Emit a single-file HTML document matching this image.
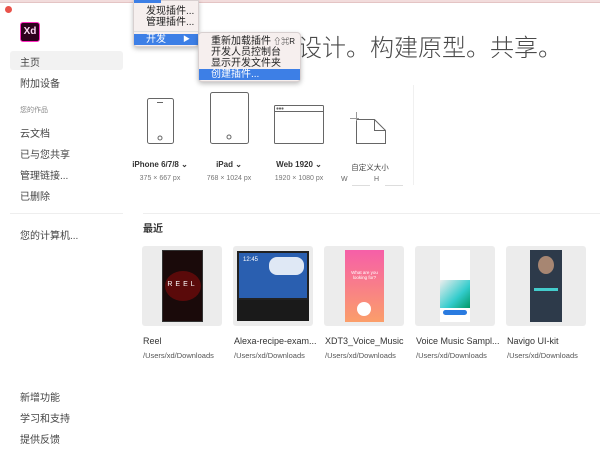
<!DOCTYPE html>
<html><head><meta charset="utf-8"><style>
*{margin:0;padding:0;box-sizing:border-box}
body{width:600px;height:453px;overflow:hidden;background:#fff;position:relative;font-family:"Liberation Sans","Noto Sans CJK SC",sans-serif;color:#333}
.a{position:absolute}
.side{font-size:10px;color:#444;left:20px}
.menu{background:#f6efee;border:1px solid #d8d0d0;box-shadow:0 2px 5px rgba(0,0,0,.25);border-radius:0 0 4px 4px;font-size:10px;color:#222}
.mi{position:absolute;left:0;right:0;height:11px;line-height:11px}
.hl{background:#3d7fe6;color:#fff}
.lab{font-size:8px;font-weight:bold;color:#333;text-align:center;width:90px}
.dim{font-size:7px;color:#777;text-align:center;width:90px}
.card{background:#ececec;border-radius:3px;width:80px;height:80px;top:246px}
.ct{font-size:9px;color:#333;top:336px}
.cp{font-size:7.5px;color:#555;top:351px}
</style></head><body>
<div class="a" style="left:0;top:0;width:600px;height:3px;background:#f2dcdc;border-bottom:1px solid #e4c4c4"></div>
<div class="a" style="left:5px;top:6px;width:7px;height:7px;border-radius:50%;background:#e9524a"></div>
<div class="a" style="left:20px;top:22px;width:20px;height:20px;background:#2e001e;border:1px solid #ff2bc2;border-radius:3px;color:#ffd9f7;font-size:10px;font-weight:bold;line-height:18px;text-align:center">Xd</div>
<div class="a" style="left:10px;top:51px;width:113px;height:19px;background:#f2f2f2;border-radius:3px"></div>
<div class="a side" style="top:54px">主页</div>
<div class="a side" style="top:75px">附加设备</div>
<div class="a side" style="top:105px;font-size:7px;color:#888">您的作品</div>
<div class="a side" style="top:125px">云文档</div>
<div class="a side" style="top:146px">已与您共享</div>
<div class="a side" style="top:167px">管理链接...</div>
<div class="a side" style="top:188px">已删除</div>
<div class="a" style="left:10px;top:213px;width:113px;height:1px;background:#eee"></div>
<div class="a side" style="top:227px">您的计算机...</div>
<div class="a side" style="top:389px">新增功能</div>
<div class="a side" style="top:410px">学习和支持</div>
<div class="a side" style="top:431px">提供反馈</div>

<div class="a" style="left:298px;top:28px;font-size:24px;color:#4a4a4a;white-space:nowrap;font-family:'Noto Sans CJK SC',sans-serif;font-weight:300">设计。构建原型。共享。</div>

<svg class="a" style="left:140px;top:85px" width="280" height="65" viewBox="140 85 280 65" fill="none" stroke="#666" stroke-width="1">
<rect x="147.5" y="98.5" width="26" height="45" rx="2"/><line x1="157" y1="102.5" x2="163" y2="102.5"/><circle cx="160" cy="138" r="2"/>
<rect x="210.5" y="92.5" width="38" height="51" rx="2"/><circle cx="229" cy="137" r="2"/>
<rect x="274.5" y="105.5" width="49" height="38" rx="1"/><line x1="274.5" y1="111.5" x2="323.5" y2="111.5"/>
<circle cx="277.5" cy="108.5" r=".6" fill="#666"/><circle cx="280" cy="108.5" r=".6" fill="#666"/><circle cx="282.5" cy="108.5" r=".6" fill="#666"/>
<path d="M356.5 119.5 H374.5 L385.5 130.5 V143.5 H356.5 Z M374.5 119.5 V130.5 H385.5"/>
<path d="M350 118.5 H359 M356.5 112 V121" stroke="#999"/>
</svg>
<div class="a lab" style="left:115px;top:160px">iPhone 6/7/8 ⌄</div>
<div class="a dim" style="left:115px;top:175px">375 × 667 px</div>
<div class="a lab" style="left:184px;top:160px">iPad ⌄</div>
<div class="a dim" style="left:184px;top:175px">768 × 1024 px</div>
<div class="a lab" style="left:254px;top:160px">Web 1920 ⌄</div>
<div class="a dim" style="left:254px;top:175px">1920 × 1080 px</div>
<div class="a" style="left:325px;top:162px;width:90px;text-align:center;font-size:7.5px;color:#444">自定义大小</div>
<div class="a" style="left:341px;top:176px;font-size:7px;color:#666">W</div>
<div class="a" style="left:374px;top:176px;font-size:7px;color:#666">H</div>
<div class="a" style="left:352px;top:185px;width:18px;height:1px;background:#ddd"></div>
<div class="a" style="left:385px;top:185px;width:18px;height:1px;background:#ddd"></div>
<div class="a" style="left:413px;top:85px;width:1px;height:100px;background:#f0f0f0"></div>
<div class="a" style="left:143px;top:213px;width:457px;height:1px;background:#eee"></div>

<div class="a" style="left:143px;top:220px;font-size:10px;font-weight:bold;color:#333">最近</div>
<div class="a card" style="left:142px"><div class="a" style="left:20px;top:4px;width:41px;height:72px;background:#1a0a0a;border:1px solid #333"><div class="a" style="left:2px;top:20px;width:36px;height:30px;border-radius:50%;background:#5a0a0a"></div><div class="a" style="left:0;width:39px;top:30px;text-align:center;color:#fff;font-size:7px;letter-spacing:3px">REEL</div></div></div>
<div class="a card" style="left:233px"><div class="a" style="left:4px;top:5px;width:72px;height:49px;background:#2a5fb0;border:2px solid #222"><div class="a" style="left:30px;top:4px;width:35px;height:18px;background:#dfe8f5;border-radius:8px"></div><div class="a" style="left:4px;top:4px;color:#fff;font-size:6px">12:45</div></div><div class="a" style="left:4px;top:54px;width:72px;height:21px;background:#1a1a1a"></div></div>
<div class="a card" style="left:324px"><div class="a" style="left:21px;top:4px;width:39px;height:72px;background:linear-gradient(#f65fa8,#fb9e6a)"><div class="a" style="left:0;width:39px;top:20px;text-align:center;color:#fff;font-size:4.5px">What are you looking for?</div><div class="a" style="left:12px;top:52px;width:14px;height:14px;border-radius:50%;background:#fff"></div></div></div>
<div class="a card" style="left:415px"><div class="a" style="left:25px;top:4px;width:30px;height:72px;background:#fff"><div class="a" style="left:0;top:30px;width:30px;height:28px;background:linear-gradient(135deg,#eee,#3cc 60%,#096)"></div><div class="a" style="left:3px;top:60px;width:24px;height:5px;background:#2a7be0;border-radius:3px"></div></div></div>
<div class="a card" style="left:506px"><div class="a" style="left:24px;top:4px;width:32px;height:72px;background:#2d3a4a"><div class="a" style="left:8px;top:6px;width:16px;height:18px;border-radius:50%;background:#a78672"></div><div class="a" style="left:4px;top:38px;width:24px;height:3px;background:#4cc"></div></div></div>
<div class="a ct" style="left:143px">Reel</div><div class="a cp" style="left:143px">/Users/xd/Downloads</div>
<div class="a ct" style="left:234px">Alexa-recipe-exam...</div><div class="a cp" style="left:234px">/Users/xd/Downloads</div>
<div class="a ct" style="left:325px">XDT3_Voice_Music</div><div class="a cp" style="left:325px">/Users/xd/Downloads</div>
<div class="a ct" style="left:416px">Voice Music Sampl...</div><div class="a cp" style="left:416px">/Users/xd/Downloads</div>
<div class="a ct" style="left:507px">Navigo UI-kit</div><div class="a cp" style="left:507px">/Users/xd/Downloads</div>

<div class="a menu" style="left:133px;top:0;width:66px;height:47px">
<div class="a" style="left:0;top:-1px;width:27px;height:3px;background:#3d7fe6"></div>
<div class="mi" style="top:5px;padding-left:12px">发现插件...</div>
<div class="mi" style="top:16px;padding-left:12px">管理插件...</div>
<div class="a" style="left:0;right:0;top:30px;height:1px;background:#ddd"></div>
<div class="mi hl" style="top:33px;padding-left:12px">开发<span style="position:absolute;right:8px;font-size:7px">▶</span></div>
</div>
<div class="a menu" style="left:198px;top:32px;width:103px;height:50px;border-radius:4px">
<div class="mi" style="top:3px;padding-left:12px">重新加载插件<span style="position:absolute;right:5px;font-size:8px">⇧⌘R</span></div>
<div class="mi" style="top:14px;padding-left:12px">开发人员控制台</div>
<div class="mi" style="top:25px;padding-left:12px">显示开发文件夹</div>
<div class="mi hl" style="top:36px;padding-left:12px">创建插件...</div>
</div>
</body></html>
